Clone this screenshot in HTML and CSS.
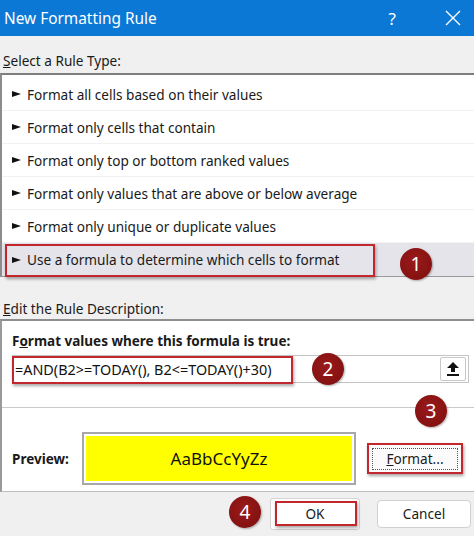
FILE: index.html
```html
<!DOCTYPE html>
<html>
<head>
<meta charset="utf-8">
<link rel="stylesheet" href="styles.css">
</head>
<body>
<div class="dialog">
  <div class="titlebar">
    <span class="title">New Formatting Rule</span>
    <span class="help">?</span>
    <span class="close">
      <svg width="16" height="16" viewBox="0 0 16 16"><path d="M1 1 L15 15 M15 1 L1 15" stroke="#fff" stroke-width="1.4" fill="none"/></svg>
    </span>
  </div>

  <div class="label label-type"><u>S</u>elect a Rule Type:</div>
  <div class="list">
    <div class="row"><svg class="ptr" width="9" height="6" viewBox="0 0 9 6"><polygon points="0,0 9,3 0,6"/></svg>Format all cells based on their values</div>
    <div class="row"><svg class="ptr" width="9" height="6" viewBox="0 0 9 6"><polygon points="0,0 9,3 0,6"/></svg>Format only cells that contain</div>
    <div class="row"><svg class="ptr" width="9" height="6" viewBox="0 0 9 6"><polygon points="0,0 9,3 0,6"/></svg>Format only top or bottom ranked values</div>
    <div class="row"><svg class="ptr" width="9" height="6" viewBox="0 0 9 6"><polygon points="0,0 9,3 0,6"/></svg>Format only values that are above or below average</div>
    <div class="row"><svg class="ptr" width="9" height="6" viewBox="0 0 9 6"><polygon points="0,0 9,3 0,6"/></svg>Format only unique or duplicate values</div>
    <div class="row selected"><svg class="ptr" width="9" height="6" viewBox="0 0 9 6"><polygon points="0,0 9,3 0,6"/></svg>Use a formula to determine which cells to format</div>
  </div>

  <div class="label label-desc"><u>E</u>dit the Rule Description:</div>
  <div class="desc">
    <div class="desc-top">
      <div class="heading">F<u>o</u>rmat values where this formula is true:</div>
      <div class="formula">
        <span class="ftext">=AND(B2&gt;=TODAY(), B2&lt;=TODAY()+30)</span>
        <span class="collapse">
          <svg width="12" height="15" viewBox="0 0 12 15"><polygon points="6,0 12,6 8,6 8,10 4,10 4,6 0,6" fill="#111"/><rect x="0" y="12" width="12" height="2" fill="#111"/></svg>
        </span>
      </div>
    </div>
    <div class="desc-bottom">
      <span class="plabel">Preview:</span>
      <div class="preview"><span>AaBbCcYyZz</span></div>
      <div class="fbtn"><span class="focus"><u>F</u>ormat...</span></div>
    </div>
  </div>

  <div class="footer">
    <div class="btn ok">OK</div>
    <div class="btn cancel">Cancel</div>
  </div>

  <div class="mark m1"></div>
  <div class="mark m2"></div>
  <div class="mark m3"></div>
  <div class="mark m4"></div>
  <div class="badge b1">1</div>
  <div class="badge b2">2</div>
  <div class="badge b3">3</div>
  <div class="badge b4">4</div>
</div>
</body>
</html>
```

FILE: styles.css
```css
* { box-sizing: border-box; }
html, body { margin: 0; padding: 0; }
body {
  background: #f0f0f0;
  font-family: "Noto Sans", "Open Sans", sans-serif;
  font-size: 13.6px;
  color: #1a1a1a;
}
.dialog {
  position: relative;
  width: 474px;
  height: 536px;
  overflow: hidden;
  background: #f0f0f0;
}
.titlebar {
  height: 36px;
  background: #0b78d6;
  color: #fff;
  display: flex;
  align-items: center;
  padding-left: 4px;
}
.title { flex: 1; font-size: 15.4px; }
.help { font-size: 17px; margin-right: 49px; }
.close { display: flex; margin-right: 13px; }

.label {
  line-height: 20px;
  padding-left: 3px;
}
.label-type { height: 37px; padding-top: 15px; }
.label-desc { height: 42px; padding-top: 22px; }

.list {
  background: #fff;
  border-top: 2px solid #7e7e7e;
  border-left: 2px solid #8c8c8c;
  border-bottom: 1px solid #9a9a9a;
  padding-top: 3px;
}
.row {
  height: 33px;
  display: flex;
  align-items: center;
  padding-left: 10px;
  border-bottom: 1px solid #f1f1f1;
}
.row.selected { background: #e4e4ea; border-bottom: none; }
.ptr { margin-right: 6px; fill: #111; }

.desc {
  background: #fff;
  border-top: 2px solid #8e8e8e;
  border-left: 2px solid #9a9a9a;
  border-bottom: 1px solid #bdbdbd;
  height: 173px;
}
.desc-top {
  height: 87px;
  padding-top: 10px;
  border-bottom: 1px solid #cacaca;
}
.heading {
  font-weight: bold;
  font-size: 13.5px;
  line-height: 20px;
  padding-left: 10px;
}
.formula {
  margin: 4px 5px 0 10px;
  height: 28px;
  border: 1px solid #c4c4c4;
  display: flex;
  align-items: center;
  padding-left: 2px;
  padding-right: 2px;
}
.ftext { flex: 1; font-size: 14.4px; color: #111; }
.collapse {
  width: 26px;
  height: 24px;
  border: 1px solid #c8c8c8;
  border-radius: 2px;
  background: #fff;
  display: flex;
  align-items: center;
  justify-content: center;
}

.desc-bottom {
  display: flex;
  align-items: center;
  padding-top: 24px;
  padding-left: 10px;
}
.plabel {
  font-weight: bold;
  font-size: 13.5px;
  width: 70px;
}
.preview {
  width: 274px;
  height: 53px;
  border: 2px solid #a8a8a8;
  padding: 2px;
  background: #fff;
}
.preview span {
  display: flex;
  align-items: center;
  justify-content: center;
  height: 100%;
  background: #ffff00;
  font-size: 17px;
  color: #111;
}
.fbtn {
  margin-left: 12px;
  width: 94px;
  height: 30px;
  border: 1px solid #adadad;
  background: #fbfbfb;
  padding: 3px;
}
.fbtn .focus {
  display: flex;
  align-items: center;
  justify-content: center;
  height: 100%;
  border: 1px dotted #555;
  font-size: 13.6px;
}

.footer {
  height: 43px;
  display: flex;
  align-items: center;
  justify-content: flex-end;
  gap: 17px;
  padding-right: 3px;
}
.btn {
  display: flex;
  align-items: center;
  justify-content: center;
  background: #fff;
  font-size: 13.6px;
}
.ok { width: 90px; height: 32px; border: 1px solid #d4d4d4; border-radius: 3px; }
.cancel { width: 94px; height: 28px; border: 1px solid #d0d0d0; border-radius: 4px; }

.mark {
  position: absolute;
  border: 2px solid #c2272d;
  box-shadow: 1px 2px 3px rgba(0,0,0,0.35);
}
.m1 { left: 5px; top: 244px; width: 370px; height: 33px; }
.m2 { left: 12px; top: 356px; width: 281px; height: 28px; }
.m3 { left: 367px; top: 443px; width: 96px; height: 31px; }
.m4 { left: 275px; top: 501px; width: 82px; height: 25px; }

.badge {
  position: absolute;
  width: 32px;
  height: 32px;
  margin: -16px 0 0 -16px;
  border-radius: 50%;
  background: radial-gradient(circle at 45% 40%, #9a1a1a, #7c0e0e);
  color: #fff;
  font-size: 19px;
  display: flex;
  align-items: center;
  justify-content: center;
  box-shadow: 1px 1px 2px rgba(0,0,0,0.3);
}
.b1 { left: 416px; top: 264px; }
.b2 { left: 328px; top: 369px; }
.b3 { left: 431px; top: 411px; }
.b4 { left: 245px; top: 512px; }
```
